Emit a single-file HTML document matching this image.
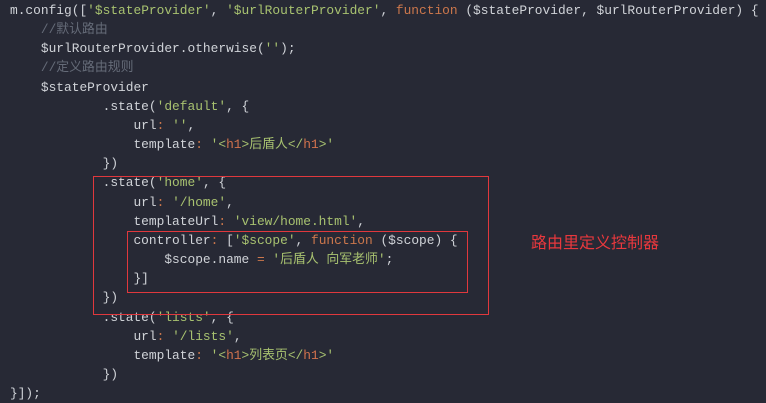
<!DOCTYPE html>
<html><head><meta charset="utf-8"><style>
html,body{margin:0;padding:0;background:#272935;width:766px;height:403px;overflow:hidden}
pre{margin:0;position:absolute;left:10px;top:1px;font-family:"Liberation Mono","Noto Sans CJK SC",monospace;font-size:12.87px;line-height:19.15px;color:#d0d3d8;white-space:pre}
.s{color:#a8c270}.k{color:#cc774c}.c{color:#656b78}.t{color:#d2734d}
.box{position:absolute;border:1px solid #e0383d}
.lbl{position:absolute;left:531px;top:229px;color:#e8383d;font-family:"Noto Sans CJK SC",sans-serif;font-size:16px}
</style></head><body>
<pre>m.config([<span class="s">'$stateProvider'</span>, <span class="s">'$urlRouterProvider'</span>, <span class="k">function</span> ($stateProvider, $urlRouterProvider) {
    <span class="c">//默认路由</span>
    $urlRouterProvider.otherwise(<span class="s">''</span>);
    <span class="c">//定义路由规则</span>
    $stateProvider
            .state(<span class="s">'default'</span>, {
                url<span class="k">:</span> <span class="s">''</span>,
                template<span class="k">:</span> <span class="s">'&lt;<span class="t">h1</span>&gt;后盾人&lt;/<span class="t">h1</span>&gt;'</span>
            })
            .state(<span class="s">'home'</span>, {
                url<span class="k">:</span> <span class="s">'/home'</span>,
                templateUrl<span class="k">:</span> <span class="s">'view/home.html'</span>,
                controller<span class="k">:</span> [<span class="s">'$scope'</span>, <span class="k">function</span> ($scope) {
                    $scope.name <span class="k">=</span> <span class="s">'后盾人 向军老师'</span>;
                }]
            })
            .state(<span class="s">'lists'</span>, {
                url<span class="k">:</span> <span class="s">'/lists'</span>,
                template<span class="k">:</span> <span class="s">'&lt;<span class="t">h1</span>&gt;列表页&lt;/<span class="t">h1</span>&gt;'</span>
            })
}]);</pre>
<div class="box" style="left:93px;top:176px;width:394px;height:137px"></div>
<div class="box" style="left:127px;top:231px;width:339px;height:60px"></div>
<div class="lbl">路由里定义控制器</div>
</body></html>
